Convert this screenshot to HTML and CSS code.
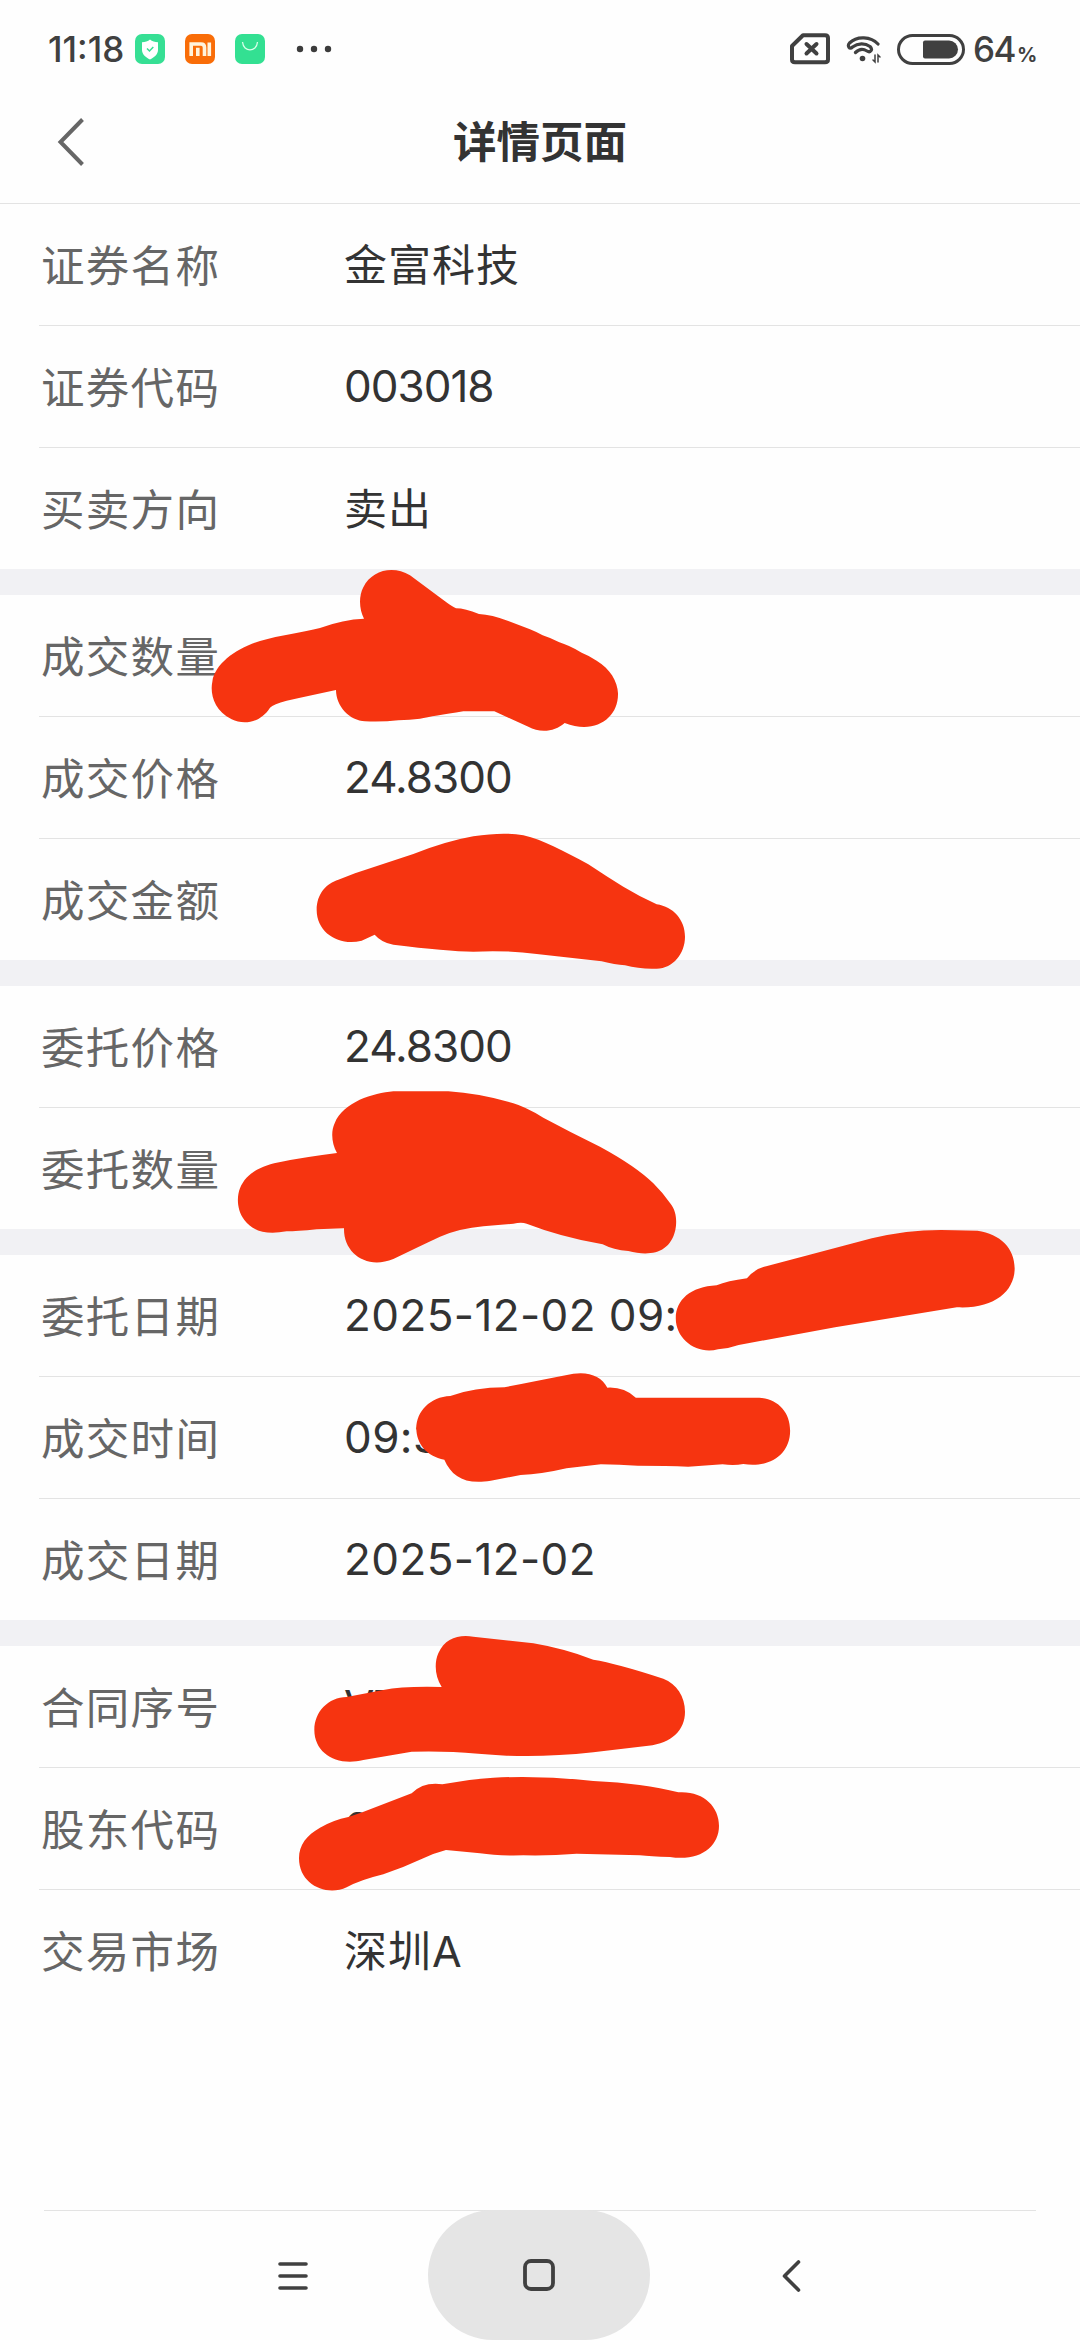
FILE: index.html
```html
<!DOCTYPE html>
<html lang="zh-CN">
<head>
    <meta charset="UTF-8">
    <meta name="viewport" content="width=device-width, initial-scale=1.0">
    <title>详情页面</title>
    <link rel="stylesheet" href="styles.css">
</head>
<body>
    <div class="page">
        <!-- 状态栏 -->
        <div class="status-bar">
            <span class="time">11:18</span>
            <div class="app-icons">
                <svg width="30" height="30" viewBox="0 0 30 30">
                    <rect width="30" height="30" rx="7" fill="#36df94"/>
                    <path d="M15 5.5 C17 7.3 20 8 23 8.3 V16 C23 20.500 19 23.500 15 25.500 C11 23.500 7 20.500 7 16 V8.300 C10 8 13 7.300 15 5.500 Z" fill="#fff"/>
                    <path d="M12 14.500 l2.500 2.500 l3.800 -4" fill="none" stroke="#36df94" stroke-width="1.500"/>
                </svg>
                <svg width="30" height="30" viewBox="0 0 30 30">
                    <rect width="30" height="30" rx="7" fill="#f96d08"/>
                    <path d="M6.200 22 V10 H16 Q19.500 10 19.500 13.500 V22 M12.800 13.800 V22 M24.300 8.500 V22" fill="none" stroke="#fff3dc" stroke-width="3.600"/>
                </svg>
                <svg width="30" height="30" viewBox="0 0 30 30">
                    <rect width="30" height="30" rx="7" fill="#33e092"/>
                    <path d="M7.500 8 C8.500 18.500 21.500 18.500 22.500 8" fill="none" stroke="#d8ffe9" stroke-width="1.300"/>
                </svg>
            </div>
            <svg class="dots" width="36" height="8" viewBox="0 0 36 8" fill="#3c3c3c">
                <circle cx="4" cy="4" r="3.200"/>
                <circle cx="18" cy="4" r="3.200"/>
                <circle cx="32" cy="4" r="3.200"/>
            </svg>
            <div class="status-right">
                <svg width="40" height="32" viewBox="0 0 40 32" fill="none" stroke="#404040">
                    <path d="M2 13 L13 2.200 H35 Q38 2.200 38 5 V26.500 Q38 29.300 35 29.300 H5 Q2 29.300 2 26.500 Z" stroke-width="4" stroke-linejoin="round"/>
                    <path d="M16.500 11 L26.500 20.500 M26.500 11 L16.500 20.500" stroke-width="4" stroke-linecap="round"/>
                </svg>
                <svg class="wifi" width="36" height="30" viewBox="0 0 36 30" fill="none" stroke="#404040" stroke-linecap="round">
                    <path d="M32 10 C25 2.500 11 1.500 3.500 9 C1 12 3.500 16 6.500 13 C12 9 19 9 24 12.500 C27.500 16 24 19 21 17 C17 14.500 13 15 9.500 18.500" stroke-width="3.200"/>
                    <circle cx="16.500" cy="24.500" r="2.800" fill="#404040" stroke="none"/>
                    <path d="M29 21 V28 L27 26 M32 28 V21 L34 23" stroke-width="1.500"/>
                </svg>
                <svg class="battery" width="68" height="31" viewBox="0 0 68 31">
                    <rect x="1.500" y="1.500" width="65" height="28" rx="14" fill="none" stroke="#404040" stroke-width="3"/>
                    <path d="M28 6.500 H52 A9 9 0 0 1 52 24.500 H28 Q26 24.500 26 22.500 V8.500 Q26 6.500 28 6.500 Z" fill="#404040"/>
                </svg>
                <span class="level">64<small>%</small></span>
            </div>
        </div>

        <!-- 标题栏 -->
        <div class="header">
            <svg class="back" width="28" height="48" viewBox="0 0 28 48">
                <path d="M25.500 1.500 L3.500 24 L25.500 46.500" fill="none" stroke="#666" stroke-width="4"/>
            </svg>
            <h1>详情页面</h1>
        </div>

        <div class="group">
            <div class="row"><span class="label">证券名称</span><span class="value">金富科技</span></div>
            <div class="row"><span class="label">证券代码</span><span class="value num">003018</span></div>
            <div class="row"><span class="label">买卖方向</span><span class="value">卖出</span></div>
        </div>
        <div class="group">
            <div class="row"><span class="label">成交数量</span><span class="value num"></span></div>
            <div class="row"><span class="label">成交价格</span><span class="value num">24.8300</span></div>
            <div class="row"><span class="label">成交金额</span><span class="value num"></span></div>
        </div>
        <div class="group">
            <div class="row"><span class="label">委托价格</span><span class="value num">24.8300</span></div>
            <div class="row"><span class="label">委托数量</span><span class="value num"></span></div>
        </div>
        <div class="group">
            <div class="row"><span class="label">委托日期</span><span class="value num date">2025-12-02 09:</span></div>
            <div class="row"><span class="label">成交时间</span><span class="value num date">09:3</span></div>
            <div class="row"><span class="label">成交日期</span><span class="value num date">2025-12-02</span></div>
        </div>
        <div class="group">
            <div class="row"><span class="label">合同序号</span><span class="value num">VT</span></div>
            <div class="row"><span class="label">股东代码</span><span class="value num">0</span></div>
            <div class="row"><span class="label">交易市场</span><span class="value">深圳A</span></div>
        </div>

        <!-- 底部导航 -->
        <div class="nav-bar">
            <svg class="nav-menu" width="30" height="28" viewBox="0 0 30 28">
                <path d="M2 2 H28 M2 14 H28 M2 26 H28" stroke="#404040" stroke-width="3.600" stroke-linecap="round"/>
            </svg>
            <div class="nav-home">
                <svg width="32" height="32" viewBox="0 0 32 32">
                    <rect x="2" y="2" width="28" height="28" rx="6" fill="none" stroke="#404040" stroke-width="3.800"/>
                </svg>
            </div>
            <svg class="nav-back" width="19" height="32" viewBox="0 0 19 32">
                <path d="M16.500 2 L2.500 16 L16.500 30" fill="none" stroke="#404040" stroke-width="3.600" stroke-linecap="round" stroke-linejoin="round"/>
            </svg>
        </div>

        <!-- 涂抹遮挡 -->
        <svg class="marks" width="1080" height="2340" viewBox="0 0 1080 2340" fill="#f63410">
            <g transform="translate(180 550) scale(.33333)">
                <path d="M552 206 C538 180 535 140 550 112 C575 60 640 45 690 76 L790 150 Q815 169 828 175 Q855 175 897 192 Q935 194 985 213 L1050 238 Q1070 246 1088 256 Q1110 263 1138 277 Q1165 285 1205 308 Q1230 318 1250 332 C1290 355 1313 395 1314 430 C1316 505 1245 555 1154 519 C1125 545 1080 550 1045 530 L943 484 H850 Q760 498 720 506 Q690 510 655 511 Q610 516 555 514 C510 512 468 470 468 420 Q380 439 320 452 Q280 462 270 473 C240 520 190 525 155 508 C100 480 90 430 97 395 C105 340 170 295 240 273 C300 255 370 247 420 234 Q490 208 552 206 Z"/>
            </g>
            <g transform="translate(290 740) scale(.33333)">
                <path d="M195 400 L370 342 Q470 303 550 289 Q640 275 700 286 C760 300 820 333 895 373 Q950 410 1000 440 Q1050 470 1100 493 C1150 500 1185 540 1185 590 C1185 640 1150 685 1100 686 Q1050 688 1005 676 Q975 674 935 664 L740 642 Q650 630 550 635 Q470 634 310 614 Q275 608 254 584 L215 602 C150 620 80 580 80 510 C80 460 110 430 145 419 Z"/>
            </g>
            <g transform="translate(200 1060) scale(.33333)">
                <path d="M411 279 C395 250 392 215 404 190 C430 125 520 100 580 94 H745 Q840 100 940 130 Q975 140 1030 173 Q1110 216 1200 260 Q1310 320 1360 370 Q1390 400 1410 429 C1432 455 1430 490 1426 510 C1410 580 1350 590 1285 573 Q1240 570 1208 553 Q1080 530 980 491 Q965 486 940 491 L850 499 Q780 505 720 530 Q660 558 580 597 C500 630 430 580 432 505 L350 508 Q290 514 260 514 C200 525 160 515 133 480 C110 450 110 410 120 385 C140 335 190 315 245 305 Q310 292 411 279 Z"/>
            </g>
            <g transform="translate(330 1200) scale(.4592 .33333)">
                <path d="M908 235 Q925 206 950 199 L1180 115 Q1270 85 1360 91 L1410 92 C1460 102 1491 145 1491 205 C1491 275 1445 328 1365 322 L1100 382 L890 435 Q870 445 845 448 C800 465 753 420 753 355 C753 300 785 260 842 256 Q865 243 908 235 Z"/>
                <path d="M262 588 Q315 562 380 562 Q440 545 530 521 C565 514 592 530 604 563 Q640 560 666 593 H935 C975 597 1002 635 1002 692 C1002 765 955 805 900 792 Q880 798 855 793 L780 800 Q735 797 670 797 Q630 794 590 793 L515 805 Q460 823 415 825 L350 842 C295 855 265 830 249 779 C210 770 188 730 188 685 C188 635 218 590 262 588 Z"/>
            </g>
            <g transform="translate(260 1600) scale(.33333)">
                <path d="M545 261 C525 230 522 190 535 160 C555 115 595 103 640 110 L820 130 Q910 145 1000 179 Q1070 190 1210 236 C1250 252 1275 290 1275 335 C1275 390 1235 430 1165 437 L1000 457 Q860 472 740 467 Q650 461 580 456 Q520 453 455 455 L310 480 C230 500 163 460 163 390 C163 335 205 292 260 291 L370 270 Q430 258 545 261 Z"/>
                <path d="M307 637 L455 580 Q490 545 547 553 Q620 538 700 533 Q850 526 1000 543 Q1150 550 1255 577 C1330 572 1377 620 1377 677 C1377 740 1320 785 1230 771 Q1170 770 1140 766 L950 761 Q870 768 790 766 Q710 768 660 760 L558 750 Q520 760 490 775 Q430 803 370 823 Q300 840 260 862 C200 890 117 855 117 775 C117 735 140 705 180 683 Q220 660 265 651 Z"/>
            </g>
        </svg>
    </div>
</body>
</html>
```
FILE: styles.css
```css
* {
    margin: 0;
    padding: 0;
    box-sizing: border-box;
}

body {
    background: #fefefe;
    color: #333;
    font-family: Inter, 'Noto Sans CJK SC', sans-serif;
}

svg {
    display: block;
    flex-shrink: 0;
}

.page {
    position: relative;
    width: 1080px;
    height: 2340px;
    overflow: hidden;
    display: flex;
    flex-direction: column;
}

/* 状态栏 */
.status-bar {
    display: flex;
    align-items: center;
    height: 98px;
    padding: 0 46px 0 48px;
    color: #404040;
}

.time {
    width: 87px;
    font-size: 35px;
    font-weight: 500;
    white-space: nowrap;
}

.app-icons {
    display: flex;
    gap: 20px;
}

.dots {
    margin: 0 0 0 31px;
}

.status-right {
    display: flex;
    align-items: center;
    margin-left: auto;
}

.wifi {
    margin-left: 16px;
}

.battery {
    margin-left: 15px;
}

.level {
    width: 61px;
    margin-left: 8px;
    font-size: 35px;
    font-weight: 500;
    letter-spacing: -1.5px;
    white-space: nowrap;
}

.level small {
    margin-left: 2px;
    font-size: 20px;
    font-weight: 700;
}

/* 标题栏 */
.header {
    display: grid;
    grid-template-columns: 84px 1fr 84px;
    align-items: center;
    height: 106px;
    padding-bottom: 18px;
    border-bottom: 1px solid #e3e3e3;
}

.back {
    margin-left: 57px;
}

.header h1 {
    padding-top: 1px;
    text-align: center;
    font-size: 43.5px;
    font-weight: 700;
    line-height: 60px;
}

/* 详情列表 */
.group {
    background: #fefefe;
}

.group + .group {
    border-top: 26px solid #f1f1f4;
}

.row {
    display: flex;
    align-items: center;
    height: 122px;
    margin-left: 39px;
    padding-left: 2px;
    border-bottom: 1px solid #e3e3e3;
}

.row:last-child {
    height: 121px;
    border-bottom: none;
}

.label {
    width: 303px;
    padding-top: 2px;
    color: #666;
    font-size: 43.5px;
    letter-spacing: 1.3px;
    line-height: 60px;
}

.value {
    padding-top: 1px;
    font-size: 43px;
    letter-spacing: 1px;
    line-height: 60px;
}

.num {
    padding: 0 0 1px;
    font-size: 44px;
    letter-spacing: -1px;
}

.date {
    letter-spacing: 0.4px;
}

/* 底部导航 */
.nav-bar {
    display: flex;
    align-items: center;
    height: 130px;
    margin: auto 44px 0;
    border-top: 1px solid #e3e3e3;
}

.nav-menu {
    margin-left: 234px;
}

.nav-home {
    display: flex;
    align-items: center;
    justify-content: center;
    width: 222px;
    height: 130px;
    margin: -1px 0 0 120px;
    border-radius: 65px;
    background: #e5e5e5;
}

.nav-back {
    margin-left: 132px;
}

.marks {
    position: absolute;
    top: 0;
    left: 0;
}
```
